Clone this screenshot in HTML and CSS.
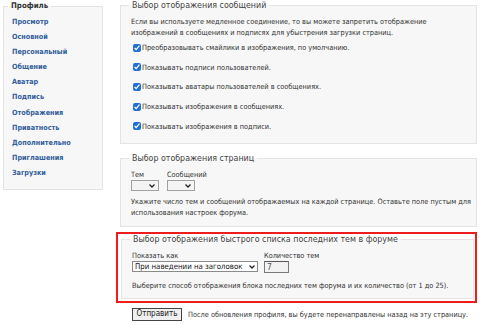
FILE: index.html
```html
<!DOCTYPE html>
<html lang="ru">
<head>
<meta charset="utf-8">
<title>Профиль</title>
<link rel="stylesheet" href="styles.css">
</head>
<body>
<div class="page">
  <fieldset class="side">
    <legend class="side-legend">Профиль</legend>
    <nav class="side-links">
      <a href="#">Просмотр</a>
      <a href="#">Основной</a>
      <a href="#">Персональный</a>
      <a href="#">Общение</a>
      <a href="#">Аватар</a>
      <a href="#">Подпись</a>
      <a href="#">Отображения</a>
      <a href="#">Приватность</a>
      <a href="#">Дополнительно</a>
      <a href="#">Приглашения</a>
      <a href="#">Загрузки</a>
    </nav>
  </fieldset>

  <main class="main">
    <fieldset class="box box-msgs">
      <legend class="box-legend">Выбор отображения сообщений</legend>
      <p class="note note-top">Если вы используете медленное соединение, то вы можете запретить отображение изображений в сообщениях и подписях для убыстрения загрузки страниц.</p>
      <label class="check"><input type="checkbox" checked><span>Преобразовывать смайлики в изображения, по умолчанию.</span></label>
      <label class="check"><input type="checkbox" checked><span>Показывать подписи пользователей.</span></label>
      <label class="check"><input type="checkbox" checked><span>Показывать аватары пользователей в сообщениях.</span></label>
      <label class="check"><input type="checkbox" checked><span>Показывать изображения в сообщениях.</span></label>
      <label class="check"><input type="checkbox" checked><span>Показывать изображения в подписи.</span></label>
    </fieldset>

    <fieldset class="box box-pages">
      <legend class="box-legend">Выбор отображения страниц</legend>
      <div class="fields">
        <label class="field">
          <span class="field-label">Тем</span>
          <span class="sel sel-small"><select><option></option></select><svg class="chev" width="6" height="4" viewBox="0 0 6 4"><path d="M0.5 0.5 L3 3 L5.5 0.5" fill="none" stroke="#222" stroke-width="1.3"/></svg></span>
        </label>
        <label class="field">
          <span class="field-label">Сообщений</span>
          <span class="sel sel-small"><select><option></option></select><svg class="chev" width="6" height="4" viewBox="0 0 6 4"><path d="M0.5 0.5 L3 3 L5.5 0.5" fill="none" stroke="#222" stroke-width="1.3"/></svg></span>
        </label>
      </div>
      <p class="note note-mid">Укажите число тем и сообщений отображаемых на каждой странице. Оставьте поле пустым для использования настроек форума.</p>
    </fieldset>

    <div class="highlight">
      <fieldset class="box box-recent">
        <legend class="box-legend">Выбор отображения быстрого списка последних тем в форуме</legend>
        <div class="fields fields-recent">
          <label class="field">
            <span class="field-label">Показать как</span>
            <span class="sel sel-wide"><select><option>При наведении на заголовок</option></select><svg class="chev" width="6" height="4" viewBox="0 0 6 4"><path d="M0.5 0.5 L3 3 L5.5 0.5" fill="none" stroke="#222" stroke-width="1.3"/></svg></span>
          </label>
          <label class="field">
            <span class="field-label">Количество тем</span>
            <input class="num" type="text" value="7">
          </label>
        </div>
        <p class="note note-bottom">Выберите способ отображения блока последних тем форума и их количество (от 1 до 25).</p>
      </fieldset>
    </div>

    <div class="submit-row">
      <button class="submit" type="button">Отправить</button>
      <span class="submit-note">После обновления профиля, вы будете перенаправлены назад на эту страницу.</span>
    </div>
  </main>
</div>
</body>
</html>
```

FILE: styles.css
```css
html, body {
  margin: 0;
  padding: 0;
  background: #ffffff;
}
body {
  font-family: "DejaVu Sans", sans-serif;
  font-stretch: condensed;
  font-size: 7.3px;
  color: #333333;
  width: 480px;
  height: 325px;
  overflow: hidden;
}
.page {
  display: flex;
  align-items: flex-start;
  padding-left: 3px;
}

/* sidebar */
.side {
  margin: 1px 0 0 0;
  width: 100px;
  box-sizing: border-box;
  border: 1px solid #e4e4e4;
  background: #f7f7f7;
  padding: 0 0 9px 8px;
  min-width: 0;
}
.side-legend {
  font-weight: bold;
  font-size: 7.8px;
  line-height: 10px;
  color: #333;
  padding: 0 3px;
  margin-left: -4px;
}
.side-links {
  display: flex;
  flex-direction: column;
  align-items: flex-start;
  padding-top: 3px;
}
.side-links a {
  display: block;
  line-height: 15.1px;
  font-size: 7.2px;
  color: #33609b;
  font-weight: bold;
  text-decoration: none;
}

/* main */
.main {
  margin-left: 17px;
  width: 357px;
  display: flex;
  flex-direction: column;
}
.box {
  margin: 0;
  border: 1px solid #e4e4e4;
  background: #f7f7f7;
  padding: 0 10px;
  min-width: 0;
}
.box-legend {
  font-size: 8.8px;
  line-height: 11px;
  color: #444;
  padding: 0 3px;
  margin-left: -2px;
}
.note {
  margin: 0;
  line-height: 11px;
  color: #333;
}
.note-top {
  margin-top: 5px;
}
.box-msgs {
  padding-bottom: 7px;
}
.check {
  display: flex;
  align-items: center;
  height: 19.6px;
  color: #333;
}
.check input {
  width: 8px;
  height: 8px;
  margin: 0 1px 0 2px;
  accent-color: #1f6fd6;
}

.box-pages {
  margin-top: 9px;
  padding: 0 3px 8px 10px;
}
.fields {
  display: flex;
  gap: 8px;
  padding-top: 6px;
}
.field {
  display: flex;
  flex-direction: column;
  align-items: flex-start;
}
.field-label {
  line-height: 10px;
  color: #333;
}
.sel {
  position: relative;
  display: block;
}
.sel select {
  display: block;
  appearance: none;
  -webkit-appearance: none;
  box-sizing: border-box;
  border: 1px solid #a0a0a0;
  border-radius: 0;
  background: #f4f4f4;
  height: 11px;
  padding: 0 0 0 2px;
  margin: 0;
  font-family: inherit;
  font-stretch: condensed;
  font-size: 8px;
  line-height: 9px;
  color: #222;
}
.sel-small select {
  width: 28px;
}
.chev {
  position: absolute;
  right: 4px;
  top: 4px;
}
.note-mid {
  margin-top: 5px;
}

/* highlighted block */
.highlight {
  margin: 5px 0 0 -4px;
  width: 361px;
  box-sizing: border-box;
  border: 2px solid #ee1c1c;
  padding: 0 1px 2px 3px;
}
.box-recent {
  padding-bottom: 7px;
}
.fields-recent {
  gap: 6px;
  padding-top: 6px;
}
.sel-wide select {
  width: 126px;
  background: #ffffff;
  border-color: #8a8a8a;
  color: #111;
  font-size: 7.8px;
  padding-left: 2px;
}
.sel-wide .chev {
  right: 3px;
}
.num {
  box-sizing: border-box;
  width: 25px;
  height: 12px;
  margin: 0;
  padding: 0 0 0 2px;
  border: 1px solid #7a7a7a;
  border-top-color: #555;
  background: #f2f2f2;
  font-family: inherit;
  font-stretch: condensed;
  font-size: 8.5px;
  color: #555;
}
.note-bottom {
  margin-top: 7px;
}

.submit-row {
  display: flex;
  align-items: center;
  gap: 6px;
  margin-top: 5px;
  padding-left: 12px;
}
.submit {
  box-sizing: border-box;
  height: 13px;
  width: 50px;
  padding: 0;
  margin: 0;
  border: 1px solid #444;
  background: #f0f0f0;
  font-family: inherit;
  font-stretch: condensed;
  font-size: 8px;
  line-height: 10px;
  color: #222;
}
.submit-note {
  color: #333;
}
```
